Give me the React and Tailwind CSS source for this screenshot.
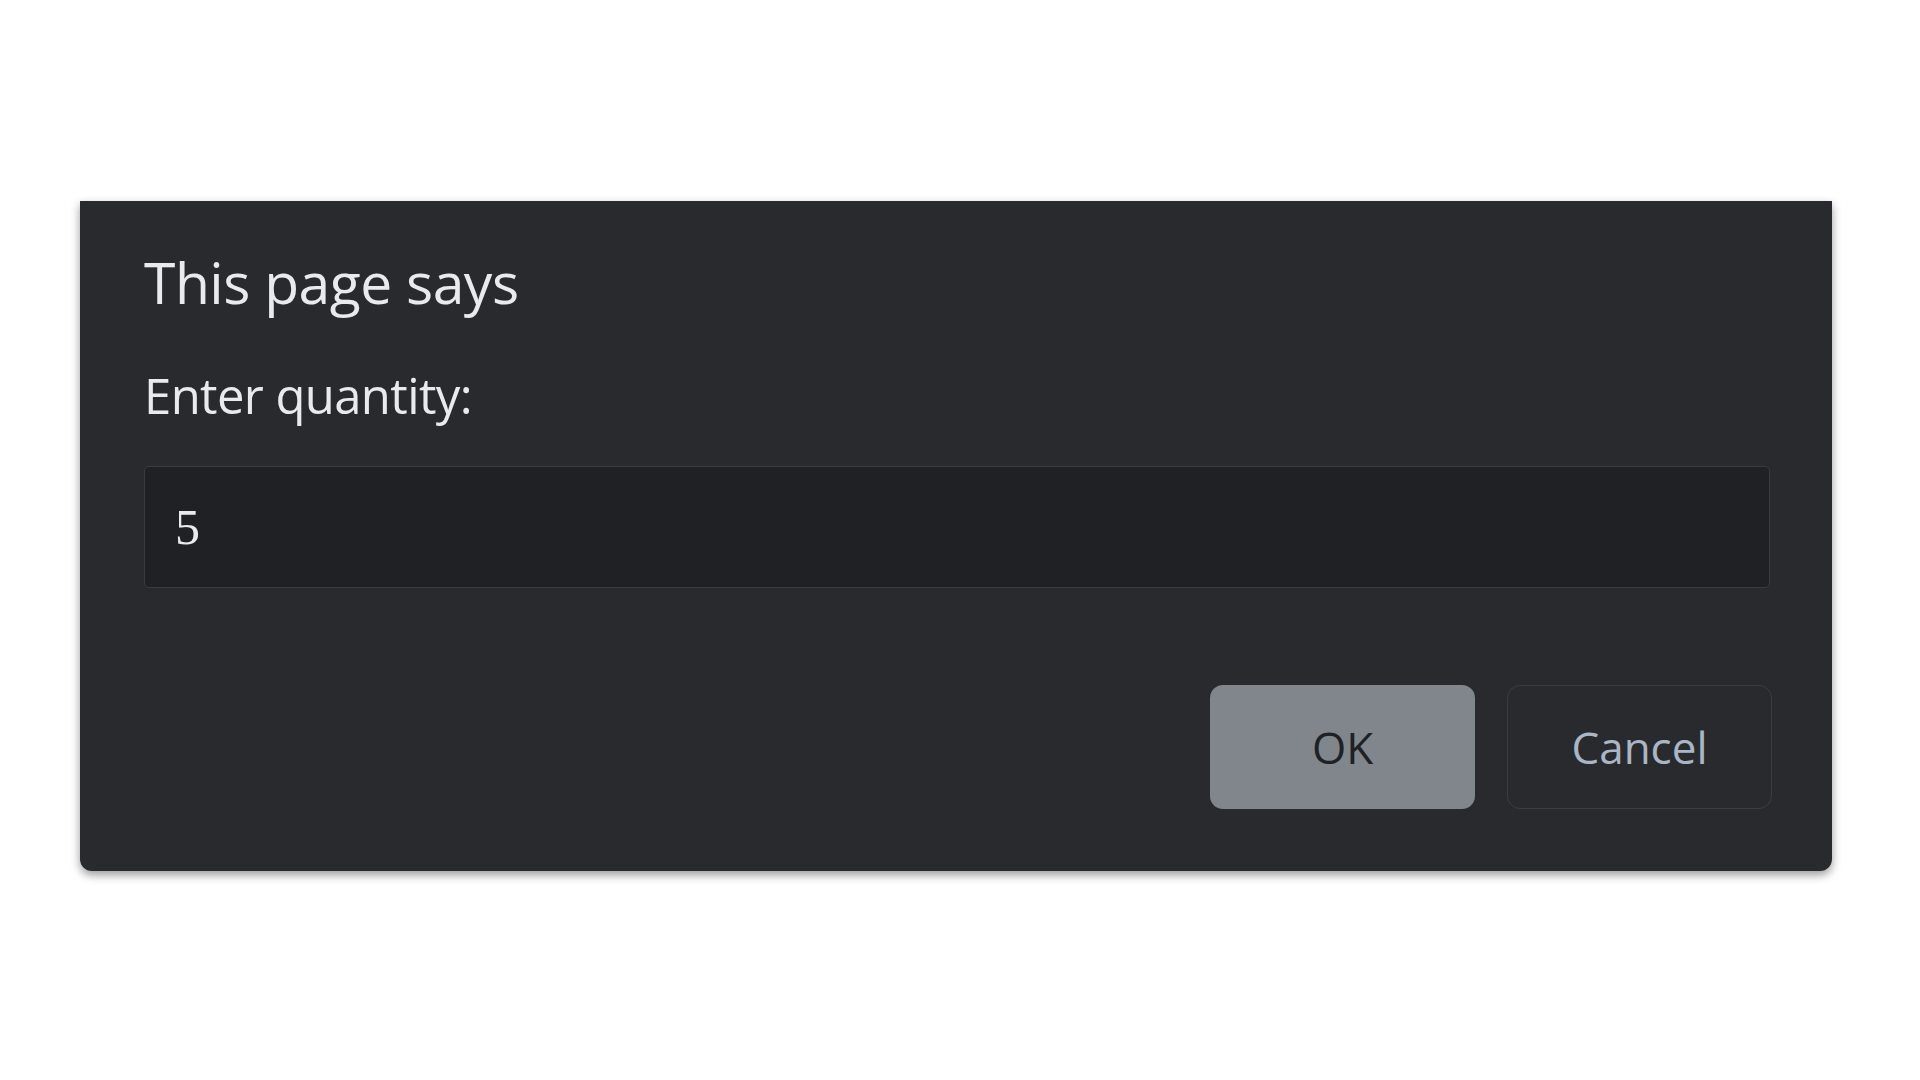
import React, { useState } from "react";

const App = () => {
  const [value, setValue] = useState("5");

  return (
    <div className="min-h-screen w-full bg-white pt-[201px] pl-[80px] font-['Open_Sans',sans-serif]">
      <div className="w-[1752px] h-[670px] bg-[#292a2d] rounded-b-[12px] shadow-[0_4px_10px_rgba(0,0,0,0.4)] px-[64px] pt-[36px] flex flex-col">
        <h1 className="text-[57px] leading-[90px] text-[#e8eaed] font-normal tracking-[-0.5px]">This page says</h1>
        <p className="mt-[36px] text-[49px] leading-[64px] text-[#e8eaed] tracking-[-0.6px]">Enter quantity:</p>
        <input
          className="mt-[39px] w-[1626px] h-[122px] bg-[#202124] border border-[#3a3b3f] rounded-[5px] px-[30px] text-[50px] text-[#e8eaed] font-serif outline-none"
          style={{ fontFamily: "'Liberation Serif', serif" }}
          value={value}
          onChange={(e) => setValue(e.target.value)}
        />
        <div className="mt-[97px] w-[1628px] flex flex-row justify-end gap-[32px]">
          <button className="w-[265px] h-[124px] rounded-[13px] bg-[#80868b] text-[#202124] text-[44px]">OK</button>
          <button className="w-[265px] h-[124px] rounded-[13px] border border-[#3c3d41] text-[#a9b6c6] text-[44px]">Cancel</button>
        </div>
      </div>
    </div>
  );
};

export default App;
